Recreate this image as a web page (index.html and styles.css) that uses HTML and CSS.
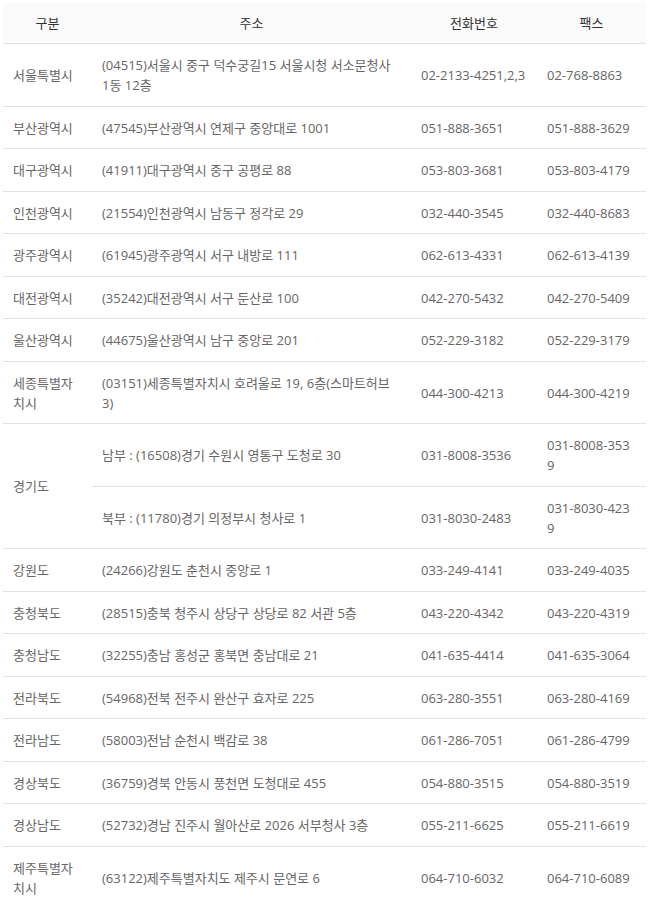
FILE: index.html
```html
<!DOCTYPE html>
<html lang="ko">
<head>
<meta charset="utf-8">
<link rel="stylesheet" href="styles.css">
</head>
<body>
<div class="wrap">
<table class="tbl">
  <colgroup>
    <col class="c1"><col class="c2"><col class="c3"><col class="c4">
  </colgroup>
  <thead>
    <tr><th>구분</th><th>주소</th><th>전화번호</th><th>팩스</th></tr>
  </thead>
  <tbody>
    <tr><td>서울특별시</td><td>(04515)서울시 중구 덕수궁길15 서울시청 서소문청사 1동 12층</td><td>02-2133-4251,2,3</td><td>02-768-8863</td></tr>
    <tr><td>부산광역시</td><td>(47545)부산광역시 연제구 중앙대로 1001</td><td>051-888-3651</td><td>051-888-3629</td></tr>
    <tr><td>대구광역시</td><td>(41911)대구광역시 중구 공평로 88</td><td>053-803-3681</td><td>053-803-4179</td></tr>
    <tr><td>인천광역시</td><td>(21554)인천광역시 남동구 정각로 29</td><td>032-440-3545</td><td>032-440-8683</td></tr>
    <tr><td>광주광역시</td><td>(61945)광주광역시 서구 내방로 111</td><td>062-613-4331</td><td>062-613-4139</td></tr>
    <tr><td>대전광역시</td><td>(35242)대전광역시 서구 둔산로 100</td><td>042-270-5432</td><td>042-270-5409</td></tr>
    <tr><td>울산광역시</td><td>(44675)울산광역시 남구 중앙로 201</td><td>052-229-3182</td><td>052-229-3179</td></tr>
    <tr><td>세종특별자치시</td><td>(03151)세종특별자치시 호려울로 19, 6층(스마트허브3)</td><td>044-300-4213</td><td>044-300-4219</td></tr>
    <tr><td rowspan="2">경기도</td><td>남부 : (16508)경기 수원시 영통구 도청로 30</td><td>031-8008-3536</td><td>031-8008-3539</td></tr>
    <tr><td>북부 : (11780)경기 의정부시 청사로 1</td><td>031-8030-2483</td><td>031-8030-4239</td></tr>
    <tr><td>강원도</td><td>(24266)강원도 춘천시 중앙로 1</td><td>033-249-4141</td><td>033-249-4035</td></tr>
    <tr><td>충청북도</td><td>(28515)충북 청주시 상당구 상당로 82 서관 5층</td><td>043-220-4342</td><td>043-220-4319</td></tr>
    <tr><td>충청남도</td><td>(32255)충남 홍성군 홍북면 충남대로 21</td><td>041-635-4414</td><td>041-635-3064</td></tr>
    <tr><td>전라북도</td><td>(54968)전북 전주시 완산구 효자로 225</td><td>063-280-3551</td><td>063-280-4169</td></tr>
    <tr><td>전라남도</td><td>(58003)전남 순천시 백감로 38</td><td>061-286-7051</td><td>061-286-4799</td></tr>
    <tr><td>경상북도</td><td>(36759)경북 안동시 풍천면 도청대로 455</td><td>054-880-3515</td><td>054-880-3519</td></tr>
    <tr><td>경상남도</td><td>(52732)경남 진주시 월아산로 2026 서부청사 3층</td><td>055-211-6625</td><td>055-211-6619</td></tr>
    <tr><td>제주특별자치시</td><td>(63122)제주특별자치도 제주시 문연로 6</td><td>064-710-6032</td><td>064-710-6089</td></tr>
  </tbody>
</table>
</div>
</body>
</html>
```

FILE: styles.css
```css
html, body {
  margin: 0;
  padding: 0;
  background: #fff;
}
.wrap {
  padding: 3px 3px 0 3px;
}
.tbl {
  width: 643px;
  border-collapse: collapse;
  table-layout: fixed;
  font-family: "Open Sans", "Noto Sans CJK KR", sans-serif;
  font-weight: 400;
  font-size: 13px;
  line-height: 20px;
  color: #666;
}
.c1 { width: 89px; }
.c2 { width: 319px; }
.c3 { width: 126px; }
.c4 { width: 109px; }
.tbl th {
  background: #fafafa;
  color: #333;
  font-weight: 400;
  height: 40px;
  padding: 0 10px;
  text-align: center;
  border-bottom: 1px solid #e2e2e2;
}
.tbl td {
  padding: 11px 10px 10.5px;
  text-align: left;
  vertical-align: middle;
  border-bottom: 1px solid #e2e2e2;
  word-break: break-all;
}
```
